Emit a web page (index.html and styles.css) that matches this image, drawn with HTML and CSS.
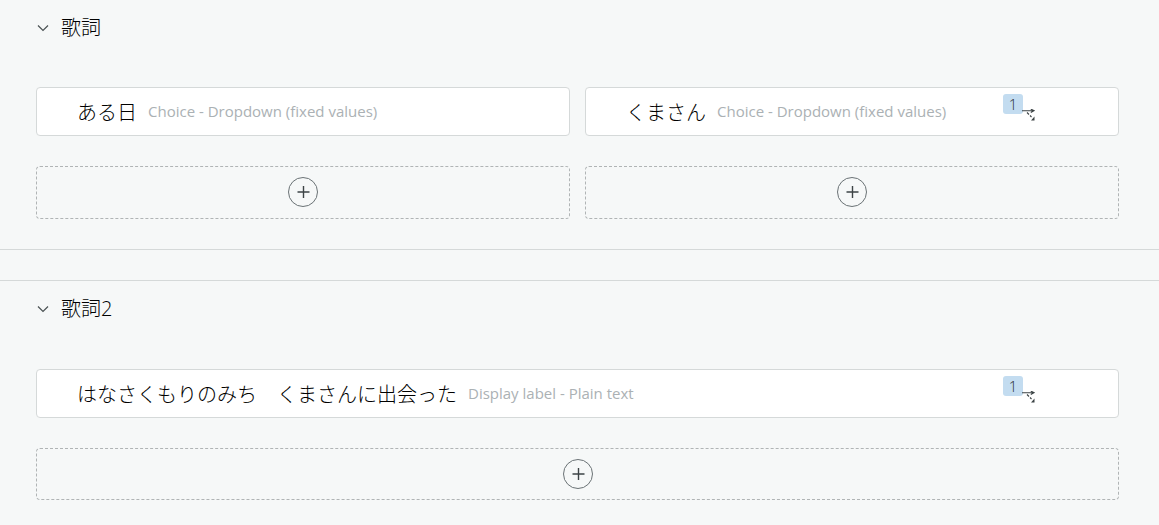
FILE: index.html
```html
<!DOCTYPE html>
<html lang="ja">
<head>
<meta charset="utf-8">
<title>歌詞</title>
<link rel="stylesheet" href="styles.css">
</head>
<body>
<div class="page">
  <section class="section section-first">
    <header class="head">
      <svg class="chev" viewBox="0 0 12 8" width="12" height="8"><path d="M1 1.5 6 6.5 11 1.5" fill="none" stroke="#4a5254" stroke-width="1.2"/></svg>
      <span class="title">歌詞</span>
    </header>
    <div class="cols">
      <div class="col">
        <div class="card"><span class="label">ある日</span><span class="type">Choice - Dropdown (fixed values)</span></div>
        <div class="drop"><span class="plus"><svg viewBox="0 0 30 30" width="30" height="30"><circle cx="15" cy="15" r="14.5" fill="none" stroke="#6a7275"/><path d="M15.5 9v12M9.5 15h12" stroke="#3c4345" stroke-width="1.4"/></svg></span></div>
      </div>
      <div class="col">
        <div class="card"><span class="label">くまさん</span><span class="type">Choice - Dropdown (fixed values)</span>
          <span class="badge">1</span>
          <svg class="link" viewBox="0 0 13 13" width="13" height="13"><path d="M0 1.7H11.5M8.8 0 12 1.7 8.8 3.4" fill="none" stroke="#3c4345" stroke-width="1.1"/><path d="M5 3.5 7 5.5M8 6.5 9.5 8" fill="none" stroke="#3c4345" stroke-width="1.1"/><path d="M12.5 11.5H9L12.5 7.5Z" fill="#3c4345"/></svg>
        </div>
        <div class="drop"><span class="plus"><svg viewBox="0 0 30 30" width="30" height="30"><circle cx="15" cy="15" r="14.5" fill="none" stroke="#6a7275"/><path d="M15.5 9v12M9.5 15h12" stroke="#3c4345" stroke-width="1.4"/></svg></span></div>
      </div>
    </div>
  </section>
  <section class="section section-last">
    <header class="head">
      <svg class="chev" viewBox="0 0 12 8" width="12" height="8"><path d="M1 1.5 6 6.5 11 1.5" fill="none" stroke="#4a5254" stroke-width="1.2"/></svg>
      <span class="title">歌詞2</span>
    </header>
    <div class="cols">
      <div class="col">
        <div class="card"><span class="label">はなさくもりのみち　くまさんに出会った</span><span class="type">Display label - Plain text</span>
          <span class="badge">1</span>
          <svg class="link" viewBox="0 0 13 13" width="13" height="13"><path d="M0 1.7H11.5M8.8 0 12 1.7 8.8 3.4" fill="none" stroke="#3c4345" stroke-width="1.1"/><path d="M5 3.5 7 5.5M8 6.5 9.5 8" fill="none" stroke="#3c4345" stroke-width="1.1"/><path d="M12.5 11.5H9L12.5 7.5Z" fill="#3c4345"/></svg>
        </div>
        <div class="drop drop-short"><span class="plus"><svg viewBox="0 0 30 30" width="30" height="30"><circle cx="15" cy="15" r="14.5" fill="none" stroke="#6a7275"/><path d="M15.5 9v12M9.5 15h12" stroke="#3c4345" stroke-width="1.4"/></svg></span></div>
      </div>
    </div>
  </section>
</div>
</body>
</html>
```
FILE: styles.css
```css
html, body { margin: 0; height: 100%; overflow: hidden; }
body {
  background: #f6f8f8;
  color: #23282a;
  font-family: "Open Sans", "Noto Sans CJK JP", sans-serif;
}
.page { margin-top: -1px; }
.section {
  border-top: 1px solid #d5d9d9;
  border-bottom: 1px solid #d5d9d9;
  padding: 0 40px 30px 36px;
  margin-bottom: 30px;
}
.section-last { border-bottom: 0; margin-bottom: 0; }
.head {
  height: 56px;
  display: flex;
  align-items: center;
  gap: 12px;
}
.chev { margin-left: 1px; flex: none; }
.title { font-size: 20px; line-height: 24px; font-weight: 300; color: #000; }
.cols { display: flex; gap: 15px; margin-top: 32px; }
.section-first .cols { margin-top: 31px; }
.col { flex: 1; display: flex; flex-direction: column; gap: 30px; min-width: 0; }
.card {
  position: relative;
  box-sizing: border-box;
  height: 49px;
  background: #fff;
  border: 1px solid #d5d9d9;
  border-radius: 4px;
  padding-left: 40px;
  display: flex;
  align-items: center;
}
.label { font-size: 20px; font-weight: 300; color: #000; margin-right: 11px; white-space: nowrap; }
.type { font-size: 15px; color: #abb1b4; white-space: nowrap; margin-bottom: 2px; }
.badge {
  position: absolute;
  right: 95px;
  top: 6px;
  width: 20px;
  height: 20px;
  border-radius: 3px;
  background: #c3dcf0;
  color: #2c3234;
  font-size: 15px;
  font-weight: 300;
  line-height: 20px;
  text-align: center;
}
.link { position: absolute; right: 83px; top: 21px; }
.drop {
  box-sizing: border-box;
  height: 53px;
  border: 1px dashed #b0b4b5;
  border-radius: 4px;
  padding-top: 10px;
  display: flex;
  justify-content: center;
}
.drop-short { height: 52px; }
.plus { display: flex; width: 30px; height: 30px; }
```
